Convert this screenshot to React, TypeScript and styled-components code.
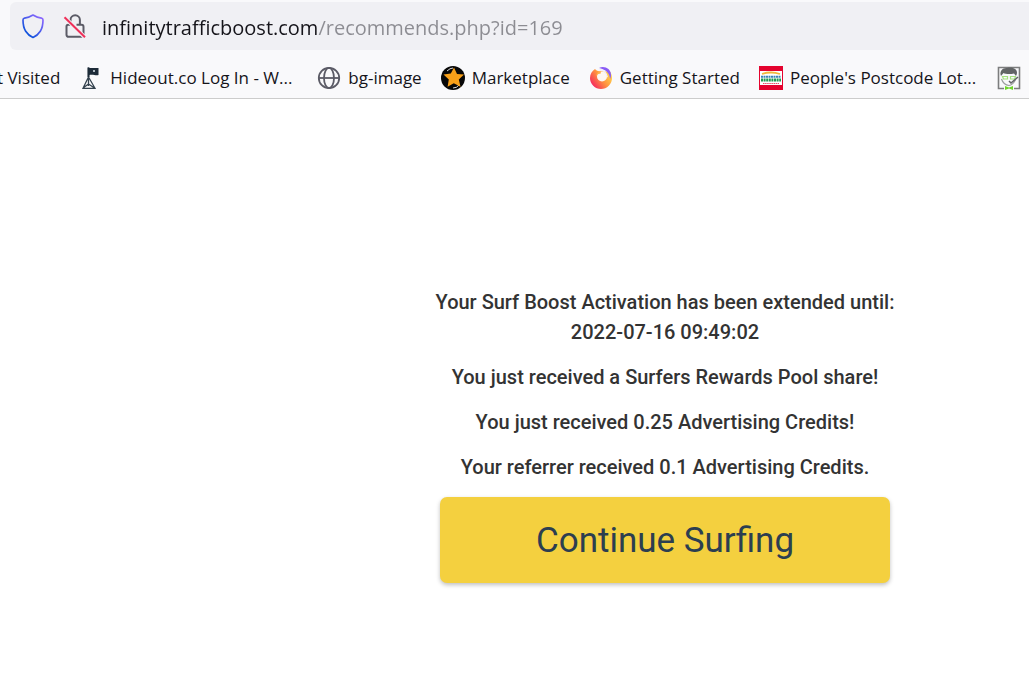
import React from "react";
import styled, { createGlobalStyle } from "styled-components";

const GlobalStyle = createGlobalStyle`
  * { box-sizing: border-box; }
  body { margin: 0; background: #ffffff; }
`;

const Chrome = styled.header`
  background: #f9f9fb;
  border-bottom: 1px solid #cccccc;
  padding-top: 2px;
  font-family: "Open Sans", "Noto Sans", sans-serif;
  color: #15141a;
`;

const AddressBar = styled.div`
  display: flex;
  align-items: center;
  height: 48px;
  margin-left: 10px;
  padding-left: 11px;
  border-radius: 6px 0 0 6px;
  background: #f0f0f4;
`;

const IconButton = styled.button`
  display: flex;
  width: 24px;
  height: 26px;
  margin-right: 18px;
  padding: 0;
  border: 0;
  background: none;
`;

const AddressInput = styled.input`
  flex: 1;
  min-width: 0;
  height: 40px;
  margin-left: -3px;
  padding: 2px 0 0;
  border: 0;
  outline: 0;
  font: 400 20px/38px "Open Sans", "Noto Sans", sans-serif;
  color: #15141a;
  background: linear-gradient(90deg, #15141a 216px, #8c8c92 216px);
  background-clip: text;
  -webkit-background-clip: text;
  -webkit-text-fill-color: transparent;
`;

const Bookmarks = styled.nav`
  display: flex;
  align-items: center;
  height: 48px;
  gap: 19px;
  padding-top: 7px;
  overflow: hidden;
`;

const Bookmark = styled.a<{ $clipped?: boolean; $long?: boolean }>`
  display: flex;
  flex: none;
  align-items: center;
  gap: 7px;
  width: ${(p) => (p.$long ? "219px" : "auto")};
  margin-left: ${(p) => (p.$clipped ? "-3px" : "0")};
  font-size: 17px;
  line-height: 24px;
  white-space: nowrap;
  color: inherit;
  text-decoration: none;
  svg { flex: none; }
`;

const Page = styled.main`
  display: flex;
  flex-direction: column;
  align-items: center;
  padding: 188px 0 40px 301px;
  font-family: Roboto, "Open Sans", sans-serif;
  text-align: center;
`;

const Message = styled.p`
  margin: 0 0 15px;
  font-size: 20px;
  font-weight: 500;
  line-height: 30px;
  color: #333333;
`;

const ContinueButton = styled.button`
  width: 450px;
  max-width: 100%;
  height: 86px;
  padding: 2px 0 0;
  border: 0;
  border-radius: 7px;
  background: #f4d03f;
  box-shadow: 0 2px 4px rgba(0, 0, 0, 0.25);
  font: 400 35px/54px Roboto, "Open Sans", sans-serif;
  color: #2c3e50;
`;

const Shield = () => (
  <svg width="24" height="26" viewBox="0 0 24 26" fill="none">
    <defs>
      <linearGradient id="shieldLine" x1="3" y1="21" x2="20" y2="3" gradientUnits="userSpaceOnUse">
        <stop offset="0" stopColor="#0250d8" />
        <stop offset="1" stopColor="#9068ff" />
      </linearGradient>
    </defs>
    <path d="M12 2Q16 4.500 20.500 5.200Q22 5.500 22 7Q22 14 19.300 18.200Q16.500 22.500 12 24.500Q7.500 22.500 4.700 18.200Q2 14 2 7Q2 5.500 3.500 5.200Q8 4.500 12 2Z" stroke="url(#shieldLine)" strokeWidth="1.700" strokeLinejoin="round" />
  </svg>
);

const BrokenLock = () => (
  <svg width="24" height="26" viewBox="0 0 24 26" fill="none">
    <path d="M7.500 11V7a4.700 4.700 0 0 1 9.400 0v4M7.500 11.800H5.300a1.800 1.800 0 0 0-1.800 1.800v8.200a2 2 0 0 0 2 2h13.200a2 2 0 0 0 1.800-2v-8a2 2 0 0 0-2-2h-5" stroke="#5b5b66" strokeWidth="2" />
    <path d="M1.500 4.200L22 24.500" stroke="#f0f0f4" strokeWidth="4" />
    <path d="M1.500 4.200L22 24.300" stroke="#ef3059" strokeWidth="2" />
  </svg>
);

const Flag = () => (
  <svg width="24" height="24" viewBox="0 0 24 24" fill="none">
    <path d="M9 1.500v8M10 2h9.500v7c-3 .8-5-.8-9.500 0z" fill="#1d2b38" />
    <path d="M9.500 1.500V20M9.500 11L4 22.300h12L9.500 11M4 22l5.500-4 6 4" stroke="#34424e" strokeWidth="1.300" />
    <path d="M9.500 1.500V11" stroke="#1d2b38" strokeWidth="2" />
    <path d="M14 4h2v2h-2z" fill="#a9b4bc" />
  </svg>
);

const Globe = () => (
  <svg width="24" height="24" viewBox="0 0 24 24" fill="none" stroke="#5b5b66" strokeWidth="1.800">
    <circle cx="12" cy="12" r="10.200" />
    <ellipse cx="12" cy="12" rx="5" ry="10.200" />
    <path d="M1.800 12h20.400" />
  </svg>
);

const Star = () => (
  <svg width="24" height="24" viewBox="0 0 24 24">
    <circle cx="12" cy="12" r="12" fill="#080808" />
    <path d="M6 5q3-3 6-3M12 22q4 0 6-3" stroke="#ddd" strokeWidth="1" fill="none" />
    <path d="M13 1.500l3 6.600 7 .5-5.200 5 1.700 7.200-6.700-3.600-6.200 3.600 1.200-7.300-5.300-4.900 7.300-1z" fill="#f8a019" />
  </svg>
);

const Firefox = () => (
  <svg width="24" height="24" viewBox="0 0 24 24">
    <defs>
      <linearGradient id="flame" x1="21" y1="6" x2="4" y2="19" gradientUnits="userSpaceOnUse">
        <stop offset="0" stopColor="#ffdc4b" />
        <stop offset=".5" stopColor="#ff9540" />
        <stop offset="1" stopColor="#f6305c" />
      </linearGradient>
    </defs>
    <path d="M6 3C3 5 1 8 1 12a11 11 0 0 0 22 0c0-2-.5-4-1.500-6L12 5C9 5.500 7 4.500 6 3z" fill="url(#flame)" />
    <circle cx="13" cy="10.500" r="5" fill="#fdf6f2" />
    <path d="M12 5.500c-3 0-5 2.500-4.500 5 .3-2 2-3.200 4-2.700z" fill="#ffb04a" />
    <path d="M10 2c5-2.500 12 .5 12 7 0 1.500-.3 2.500-1 4C21 8 17.500 3.500 10 2z" fill="#8a5cf5" />
    <path d="M10 2.500c5 1 8.500 4 9 9l-1.500-1C17 7 14.500 5 11 5z" fill="#f3eefb" />
  </svg>
);

const Postcode = () => (
  <svg width="24" height="24" viewBox="0 0 24 24">
    <path fill="#e4032e" d="M0 0h24v24H0z" />
    <path fill="#fff" d="M1 5h22v14H1z" />
    <path d="M3 8q9-3 18 0" stroke="#f3b63a" strokeWidth="1.800" fill="none" />
    <path d="M2 10.800h20" stroke="#3b82b5" strokeWidth="2" strokeDasharray="2 .5" />
    <path d="M2 14h20" stroke="#1e9b52" strokeWidth="3" strokeDasharray="2 .6" />
    <path d="M4 17.500h16" stroke="#e65068" strokeWidth="1.200" strokeDasharray="1.500 .6" />
  </svg>
);

const Face = () => (
  <svg width="24" height="24" viewBox="0 0 24 24" fill="none">
    <path d="M7 22.500H1.500v-21h21v21H17" stroke="#7c7d7e" strokeWidth="1.600" />
    <path d="M4 10C2 5 6 1.500 10 2c6-1.500 10 1.500 10 4.500 0 1.500-.5 2.500-1 3.500L17 7.500C13 8.500 8 8 6.500 7z" fill="#626466" />
    <path d="M4.500 13c1 3 4 6 7.500 6.500 3-.5 5-3 6.500-5.500" stroke="#9b9d9e" strokeWidth="1.200" />
    <path d="M5.500 10.500h5v2.500h-4zM13.500 10.500h5l-1 2.500h-4z" stroke="#a5e080" strokeWidth="1.200" />
    <path d="M12 15l2 2 7-6" stroke="#626466" strokeWidth="1.500" />
    <path d="M8 20l4 1.500 4-1.500v4l-4-1.500L8 24z" fill="#70d62c" />
  </svg>
);

export default function App() {
  return (
    <>
      <GlobalStyle />
      <Chrome>
        <AddressBar>
          <IconButton aria-label="Tracking protection"><Shield /></IconButton>
          <IconButton aria-label="Connection not secure"><BrokenLock /></IconButton>
          <AddressInput aria-label="Address" defaultValue="infinitytrafficboost.com/recommends.php?id=169" />
        </AddressBar>
        <Bookmarks aria-label="Bookmarks">
          <Bookmark href="#" $clipped>t Visited</Bookmark>
          <Bookmark href="#" $long><Flag />Hideout.co Log In - W...</Bookmark>
          <Bookmark href="#"><Globe />bg-image</Bookmark>
          <Bookmark href="#"><Star />Marketplace</Bookmark>
          <Bookmark href="#"><Firefox />Getting Started</Bookmark>
          <Bookmark href="#" $long><Postcode />People's Postcode Lot...</Bookmark>
          <Bookmark href="#" aria-label="Saved page"><Face /></Bookmark>
        </Bookmarks>
      </Chrome>
      <Page>
        <Message>Your Surf Boost Activation has been extended until:<br />2022-07-16 09:49:02</Message>
        <Message>You just received a Surfers Rewards Pool share!</Message>
        <Message>You just received 0.25 Advertising Credits!</Message>
        <Message>Your referrer received 0.1 Advertising Credits.</Message>
        <ContinueButton type="button">Continue Surfing</ContinueButton>
      </Page>
    </>
  );
}
